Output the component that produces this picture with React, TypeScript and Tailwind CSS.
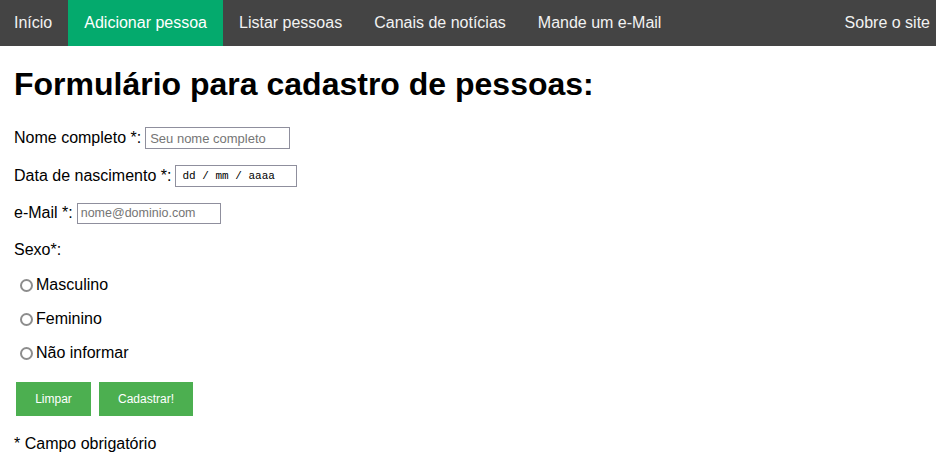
const navItems = [
  { label: 'Início', active: false },
  { label: 'Adicionar pessoa', active: true },
  { label: 'Listar pessoas', active: false },
  { label: 'Canais de notícias', active: false },
  { label: 'Mande um e-Mail', active: false },
]

function Radio({ label }: { label: string }) {
  return (
    <label className="flex h-[18px] items-center">
      <span className="ml-[6px] mr-[3px] h-[13px] w-[13px] rounded-full border-2 border-[#8d8d8d] bg-white" />
      <span>{label}</span>
    </label>
  )
}

export default function App() {
  return (
    <div className="min-h-screen bg-white text-[16px] text-black" style={{ fontFamily: '"Liberation Sans", Arial, sans-serif' }}>
      {/* Top navigation */}
      <nav className="flex h-[46px] bg-[#444444] text-[16px] leading-[18px] text-[#f2f2f2]">
        {navItems.map((item, i) => (
          <a
            key={item.label}
            className={`${i === 0 ? 'pl-[14px] pr-[16px]' : 'px-4'} py-[14px] ${item.active ? 'bg-[#04AA6D] text-white' : ''}`}
          >
            {item.label}
          </a>
        ))}
        <a className="ml-auto py-[14px] pl-4 pr-[6px]">Sobre o site</a>
      </nav>

      <main className="px-[14px]">
        <h1 className="mt-[20px] text-[32px] font-bold leading-[37px]">Formulário para cadastro de pessoas:</h1>

        <div className="mt-[24px] flex h-[22px] items-center">
          <span>Nome completo *:</span>
          <input
            className="ml-[4px] h-[22px] w-[145px] border border-[#8f8f9d] px-[4px] text-[13px] placeholder:text-[#757575]"
            placeholder="Seu nome completo"
          />
        </div>

        <div className="mt-[16px] flex h-[22px] items-center">
          <span>Data de nascimento *:</span>
          <div
            className="ml-[4px] flex h-[22px] w-[122px] items-center border border-[#8f8f9d] px-[6px] text-[11px] text-black"
            style={{ fontFamily: '"Liberation Mono", "Courier New", monospace' }}
          >
            dd / mm / aaaa
          </div>
        </div>

        <div className="mt-[15px] flex h-[22px] items-center">
          <span>e-Mail *:</span>
          <input
            className="ml-[4px] h-[21px] w-[144px] border border-[#8f8f9d] px-[3px] text-[12.5px] placeholder:text-[#757575]"
            placeholder="nome@dominio.com"
          />
        </div>

        <p className="mt-[17px] leading-[18px]">Sexo*:</p>

        <div className="mt-[17px] flex flex-col gap-[16px]">
          <Radio label="Masculino" />
          <Radio label="Feminino" />
          <Radio label="Não informar" />
        </div>

        <div className="ml-[2px] mt-[20px] flex gap-[8px] text-[12px] text-white">
          <button className="h-[34px] w-[75px] bg-[#4CAF50]">Limpar</button>
          <button className="h-[34px] w-[94px] bg-[#4CAF50]">Cadastrar!</button>
        </div>

        <p className="mt-[19px] leading-[18px]">* Campo obrigatório</p>
      </main>
    </div>
  )
}
